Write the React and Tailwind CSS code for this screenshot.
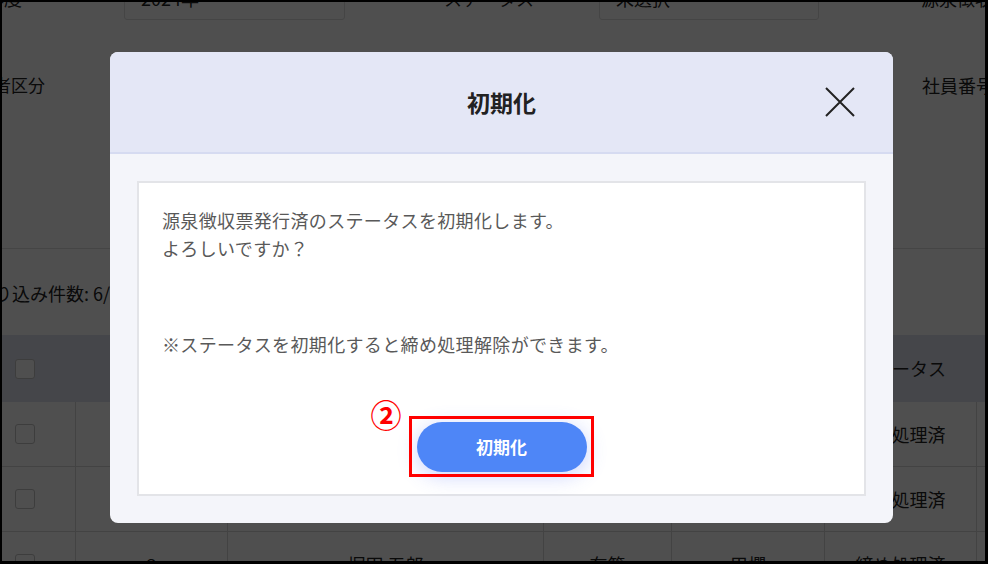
import React from "react";

const rows = [
    { no: "1", name: "山田 太郎", kubun: "在籍", zei: "甲欄", status: "締め処理済" },
    { no: "2", name: "佐藤 花子", kubun: "在籍", zei: "甲欄", status: "締め処理済" },
    { no: "3", name: "堀田 五郎", kubun: "在籍", zei: "甲欄", status: "締め処理済" },
];

const cols = "grid grid-cols-[74px_152px_316px_128px_153px_152px_1fr]";

function Checkbox() {
    return <span className="block w-[20px] h-[20px] rounded-[3px] border border-[#c4c4c4] bg-white" />;
}

// background page (dimmed by the overlay)
function Page() {
    return (
        <div className="h-full w-full bg-white text-[#222] text-[18px] font-['Noto_Sans_CJK_JP',sans-serif] flex flex-col overflow-hidden">
            {/* search form, first row */}
            <div className="-mt-[26px] h-[44px] flex items-center shrink-0 whitespace-nowrap">
                <span className="-ml-[52px] w-[72px] shrink-0">対象年度</span>
                <div className="ml-[102px] w-[221px] h-[44px] shrink-0 border border-[#ddd] rounded-[3px] flex items-center px-4">2024年</div>
                <span className="ml-[99px] shrink-0">ステータス</span>
                <div className="ml-[65px] w-[220px] h-[44px] shrink-0 border border-[#ddd] rounded-[3px] flex items-center px-4">未選択</div>
                <span className="ml-[102px] shrink-0">源泉徴収票</span>
            </div>

            {/* search form, second row */}
            <div className="mt-[45px] h-[40px] flex items-center shrink-0 whitespace-nowrap text-[17px]">
                <span className="-ml-[42px] w-[85px] shrink-0">入力者区分</span>
                <span className="ml-[877px] shrink-0 text-[18px]">社員番号</span>
            </div>

            <div className="h-[144px] shrink-0 border-b border-[#ddd]" />

            <div className="mt-[30px] h-[28px] leading-[28px] -ml-[26px] whitespace-nowrap shrink-0">絞り込み件数: 6/6</div>

            {/* list */}
            <div className="mt-[28px] shrink-0">
                <div className={cols + " h-[67px] bg-[#dfe2ef] items-center"}>
                    <div className="pl-[13px]"><Checkbox /></div>
                    <div className="text-center">No.</div>
                    <div className="text-center">氏名</div>
                    <div className="text-center">在籍区分</div>
                    <div className="text-center">税表区分</div>
                    <div className="text-center whitespace-nowrap">ステータス</div>
                    <div />
                </div>
                {rows.map((r) => (
                    <div key={r.no} className={cols + " h-[65px] border-b border-[#d9d9d9]"}>
                        <div className="pl-[13px] flex items-center border-r border-[#d9d9d9]"><Checkbox /></div>
                        <div className="flex items-center justify-center border-r border-[#d9d9d9]">{r.no}</div>
                        <div className="flex items-center justify-center border-r border-[#d9d9d9]">{r.name}</div>
                        <div className="flex items-center justify-center border-r border-[#d9d9d9]">{r.kubun}</div>
                        <div className="flex items-center justify-center border-r border-[#d9d9d9]">{r.zei}</div>
                        <div className="flex items-center justify-center border-r border-[#d9d9d9] whitespace-nowrap">{r.status}</div>
                        <div />
                    </div>
                ))}
            </div>
        </div>
    );
}

export default function App() {
    return (
        <div className="relative w-[988px] h-[564px] overflow-hidden bg-white border-l-2 border-t-2 border-r-[3px] border-b-[3px] border-black">
            <Page />
            <div className="absolute inset-0 bg-black/[0.69]" />

            {/* modal */}
            <div className="absolute inset-0 pt-[50px] pl-[108px]">
                <div className="w-[783px] h-[471px] rounded-[8px] overflow-hidden bg-[#f4f5fa] font-['Noto_Sans_CJK_JP',sans-serif] flex flex-col">
                    <div className="h-[102px] shrink-0 bg-[#e4e7f6] border-b-2 border-[#d6dbf1] grid grid-cols-[1fr_auto_1fr] items-center">
                        <div />
                        <h2 className="text-[23px] font-bold text-[#222] leading-none">初期化</h2>
                        <button className="justify-self-end mr-[38px] w-[30px] h-[30px] text-[#222]">
                            <svg width="30" height="30" viewBox="0 0 30 30" fill="none" stroke="currentColor" strokeWidth="2">
                                <path d="M1 1 L29 29 M29 1 L1 29" />
                            </svg>
                        </button>
                    </div>

                    <div className="p-[27px]">
                        <div className="h-[315px] bg-white border-2 border-[#e3e4e8] px-[23px] pt-[23px] text-[18px] leading-[28px] tracking-[0.35px] text-[#595959]">
                            <p>源泉徴収票発行済のステータスを初期化します。</p>
                            <p>よろしいですか？</p>
                            <p className="mt-[68px]">※ステータスを初期化すると締め処理解除ができます。</p>

                            <div className="mt-[64px] flex justify-center">
                                <div className="relative">
                                    <button className="w-[170px] h-[50px] rounded-full bg-[#4e86f7] text-white text-[17px] font-bold tracking-normal shadow-[0_4px_20px_rgba(78,110,247,0.3)]">
                                        初期化
                                    </button>
                                    {/* annotation */}
                                    <span className="absolute -left-[8px] -top-[6px] -right-[7px] -bottom-[5px] border-[3px] border-[#ff0000] pointer-events-none" />
                                    <span className="absolute -left-[46px] -top-[24px] text-[31px] leading-none font-bold tracking-normal text-[#ff0000]">②</span>
                                </div>
                            </div>
                        </div>
                    </div>
                </div>
            </div>
        </div>
    );
}
